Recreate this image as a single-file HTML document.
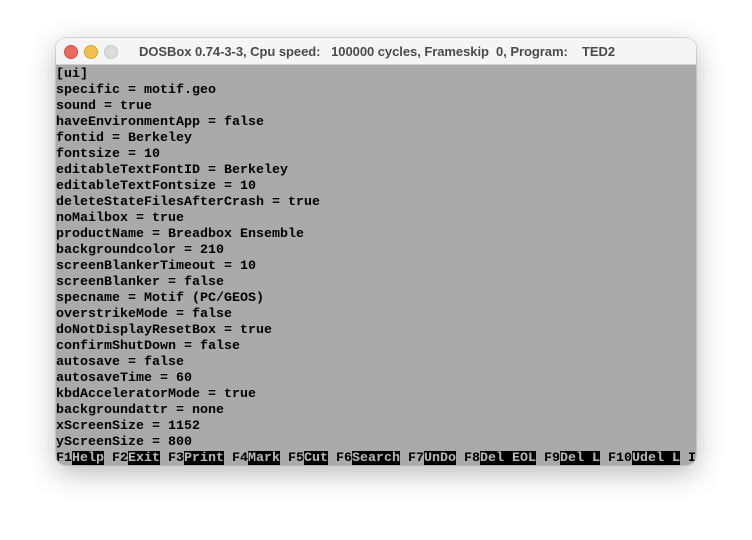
<!DOCTYPE html>
<html><head><meta charset="utf-8"><style>
html,body{margin:0;padding:0;background:#fff;width:752px;height:540px;overflow:hidden}
.win{position:absolute;left:56px;top:38px;width:640px;height:427px;border-radius:10px;overflow:hidden;box-shadow:0 8px 28px rgba(0,0,0,0.28),0 0 0 1px rgba(0,0,0,0.12)}
.tb{position:absolute;left:0;top:0;width:640px;height:27px;background:#f5f5f5;border-bottom:1px solid #d0d0d0;box-sizing:border-box}
.dot{position:absolute;top:7px;width:12px;height:12px;border-radius:50%}
.title{position:absolute;left:83px;top:6px;font:bold 13px "Liberation Sans",sans-serif;color:#4a4a4a;white-space:pre;letter-spacing:-0.05px}
.scr{position:absolute;left:0;top:27px;width:640px;height:400px;background:#aaaaaa}
pre{margin:0;padding-top:2px;font:bold 13.33px/16px "Liberation Mono",monospace;color:#000;white-space:pre}
.k{background:#000;color:#bbb}
</style></head><body>
<div class="win">
<div class="tb">
<div class="dot" style="left:8px;background:#ed6a5e;border:0.5px solid #d05448"></div>
<div class="dot" style="left:28px;background:#f4bf4f;border:0.5px solid #d6a13a"></div>
<div class="dot" style="left:48px;background:#dcdcdc;border:0.5px solid #c8c8c8"></div>
<div class="title">DOSBox 0.74-3-3, Cpu speed:   100000 cycles, Frameskip  0, Program:    TED2</div>
</div>
<div class="scr"><pre>[ui]
specific = motif.geo
sound = true
haveEnvironmentApp = false
fontid = Berkeley
fontsize = 10
editableTextFontID = Berkeley
editableTextFontsize = 10
deleteStateFilesAfterCrash = true
noMailbox = true
productName = Breadbox Ensemble
backgroundcolor = 210
screenBlankerTimeout = 10
screenBlanker = false
specname = Motif (PC/GEOS)
overstrikeMode = false
doNotDisplayResetBox = true
confirmShutDown = false
autosave = false
autosaveTime = 60
kbdAcceleratorMode = true
backgroundattr = none
xScreenSize = 1152
yScreenSize = 800
F1<span class="k">Help</span> F2<span class="k">Exit</span> F3<span class="k">Print</span> F4<span class="k">Mark</span> F5<span class="k">Cut</span> F6<span class="k">Search</span> F7<span class="k">UnDo</span> F8<span class="k">Del EOL</span> F9<span class="k">Del L</span> F10<span class="k">Udel L</span> I</pre></div>
</div>
</body></html>
